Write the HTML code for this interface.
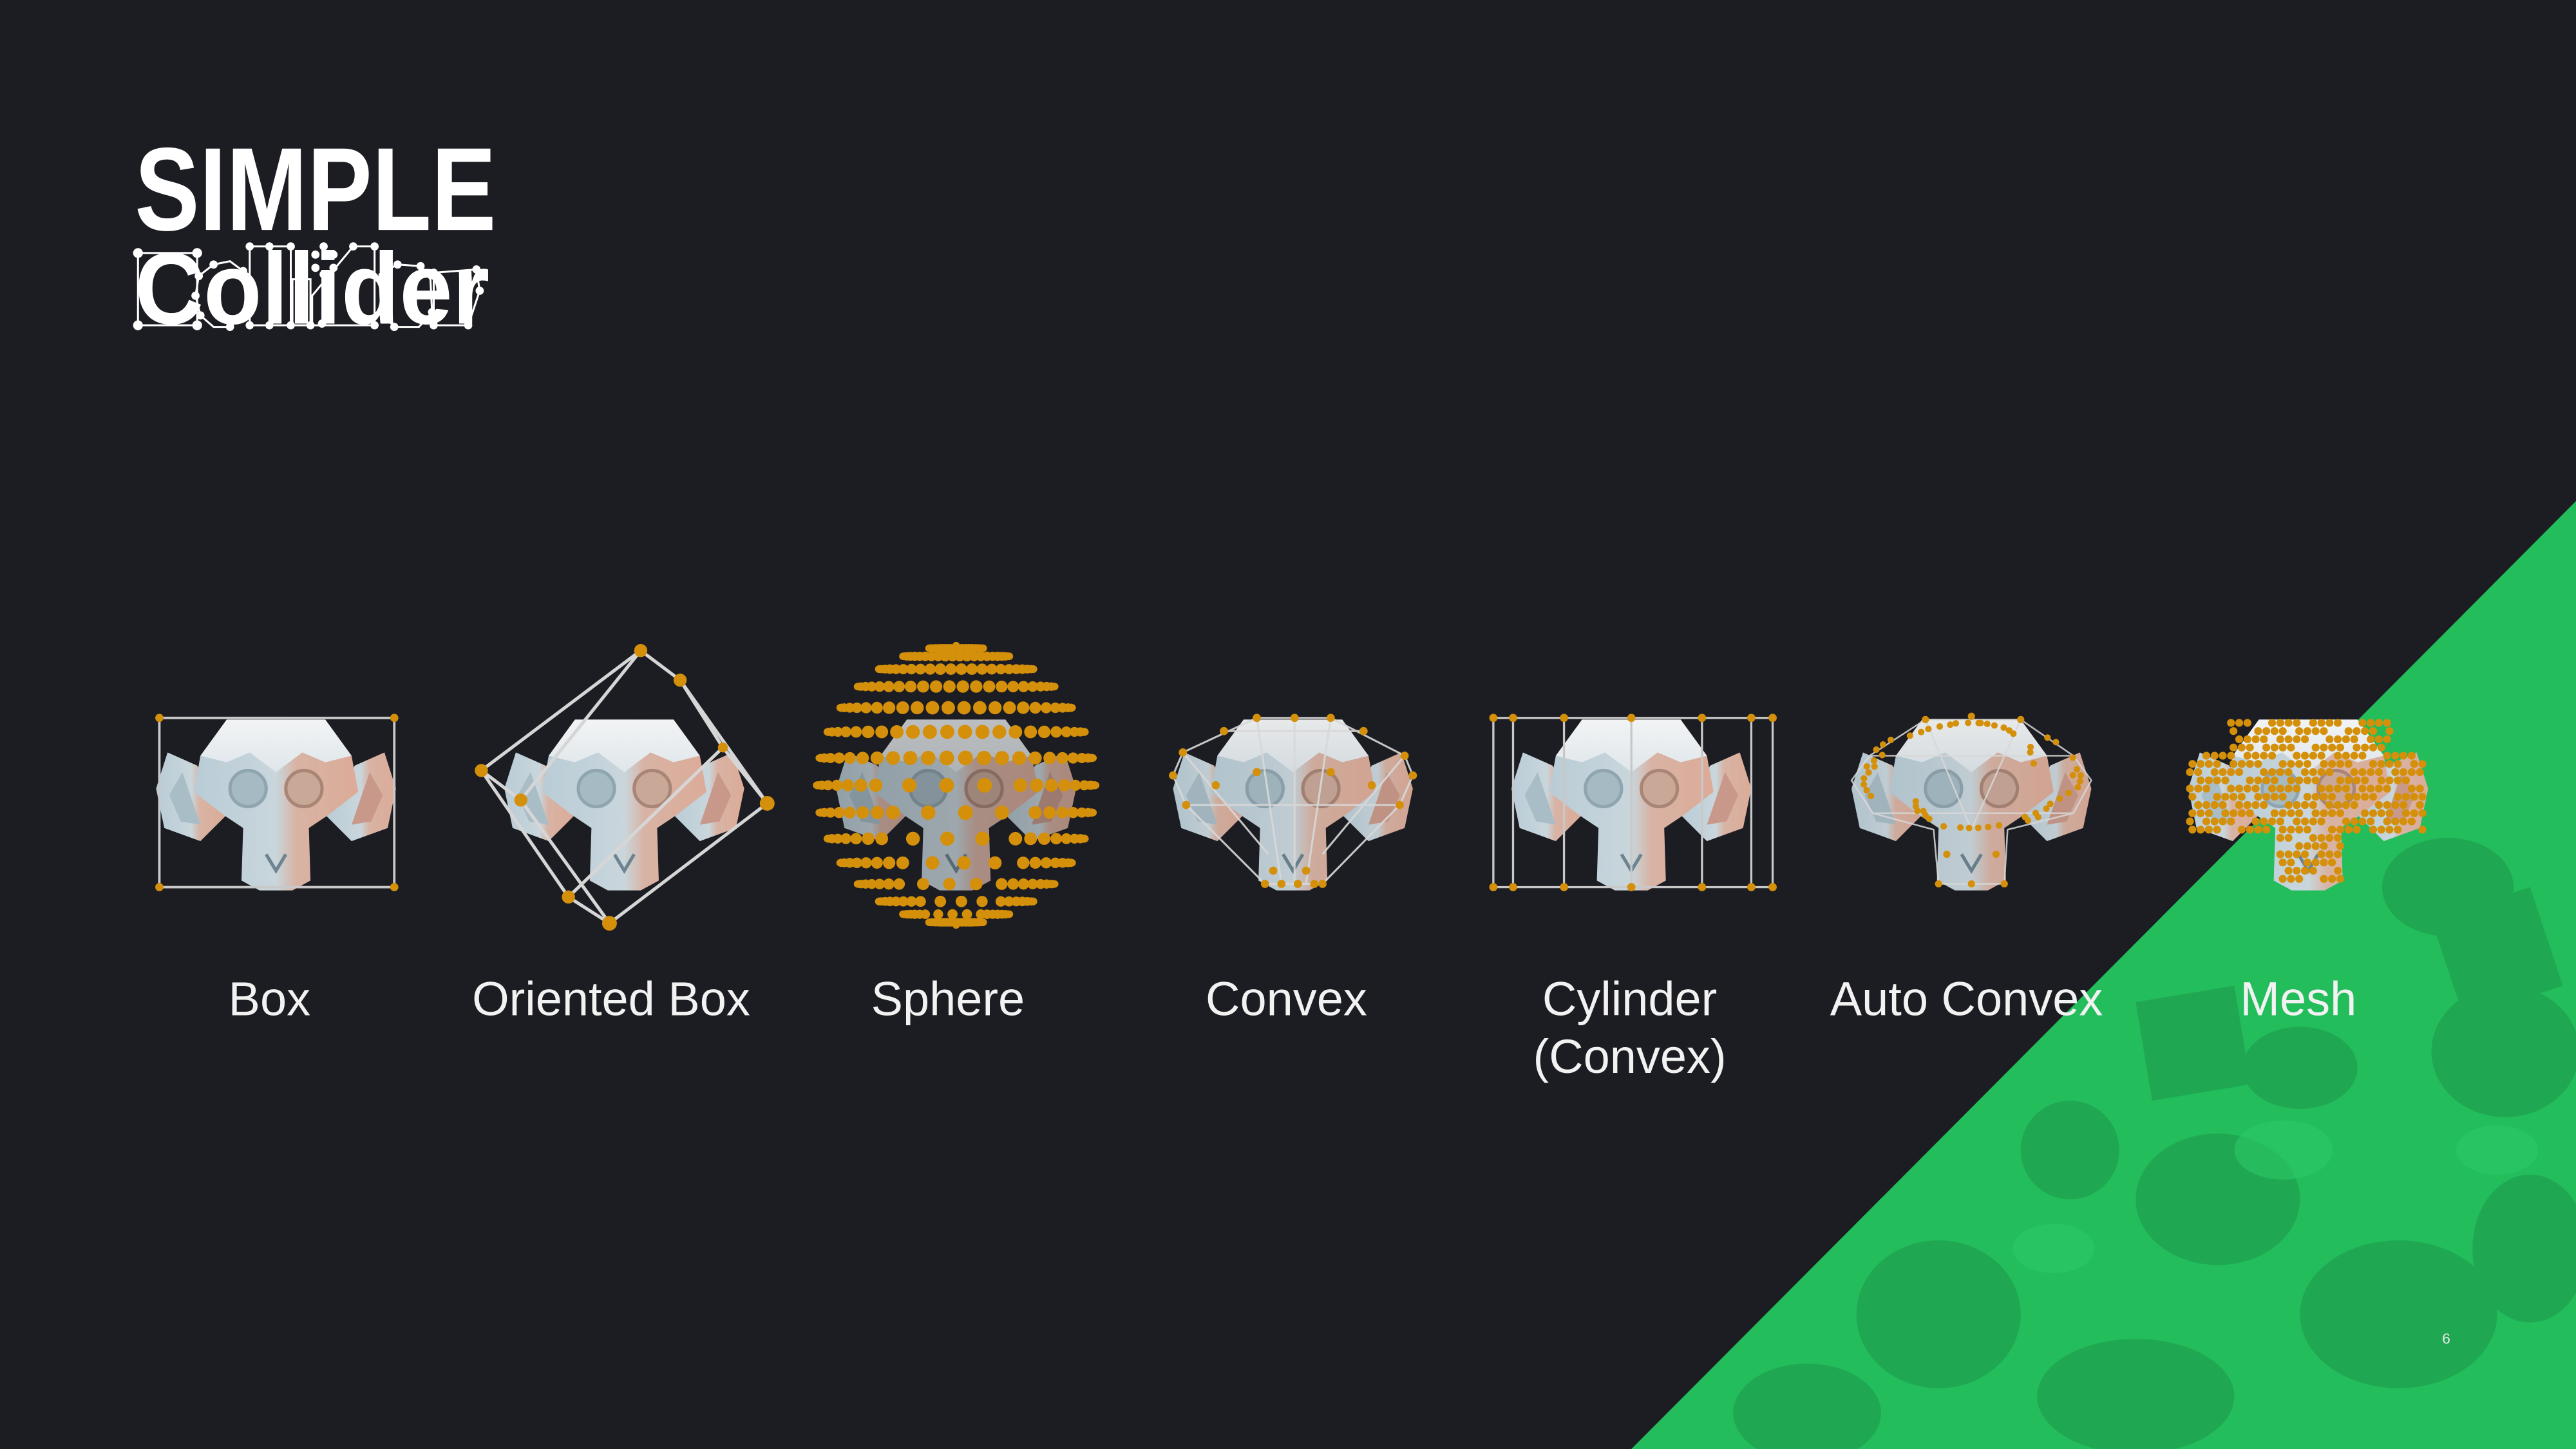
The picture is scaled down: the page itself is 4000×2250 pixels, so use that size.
<!DOCTYPE html>
<html><head><meta charset="utf-8">
<style>
html,body{margin:0;padding:0;background:#1c1d22;}
svg{display:block;}
</style></head>
<body>
<svg id="s" width="4000" height="2250" viewBox="0 0 1568 882" xmlns="http://www.w3.org/2000/svg">
<defs>
<linearGradient id="mk" x1="0" x2="1" y1="0" y2="0">
<stop offset="0" stop-color="#b9ccd6"/><stop offset="0.5" stop-color="#c9d6dc"/><stop offset="0.62" stop-color="#d8b3a4"/><stop offset="1" stop-color="#dcab98"/>
</linearGradient>
<linearGradient id="top" x1="0" y1="0" x2="0" y2="1"><stop offset="0" stop-color="#f2f4f5"/><stop offset="1" stop-color="#dfe6ea"/></linearGradient>
<g id="monkey">
<path d="M-48,-22 L-66,-30 L-73,-8 L-68,16 L-46,24 L-30,8 Z" fill="url(#mk)"/>
<path d="M48,-22 L66,-30 L73,-8 L68,16 L46,24 L30,8 Z" fill="url(#mk)"/>
<path d="M-57,-18 L-65,-4 L-58,12 L-46,14 Z" fill="#a9bdc7"/>
<path d="M57,-18 L65,-4 L58,12 L46,14 Z" fill="#c8998a"/>
<path d="M-30,-50 L30,-50 L46,-28 L50,-6 L32,8 L20,16 L21,48 L10,54 L-10,54 L-21,48 L-20,16 L-32,8 L-50,-6 L-46,-28 Z" fill="url(#mk)"/>
<path d="M-30,-50 L30,-50 L46,-28 L30,-24 L16,-30 L0,-18 L-16,-30 L-30,-24 L-46,-28 Z" fill="url(#top)"/>
<circle cx="-17" cy="-8" r="11" fill="#a6bac4" stroke="#8fa5b0" stroke-width="2"/>
<circle cx="17" cy="-8" r="11" fill="#c9a898" stroke="#a98576" stroke-width="2"/>
<path d="M-6,32 L0,42 L6,32" fill="none" stroke="#6d8490" stroke-width="2"/>
</g>
</defs>
<rect width="1568" height="882" fill="#1c1d22"/>
<!-- green -->
<polygon points="1568,305 993,882 1568,882" fill="#23bd5b"/>
<g fill="#1fa550" opacity="0.85">
<ellipse cx="1525" cy="640" rx="45" ry="40"/><ellipse cx="1490" cy="540" rx="40" ry="30"/>
<ellipse cx="1260" cy="700" rx="30" ry="30"/><ellipse cx="1350" cy="730" rx="50" ry="40"/>
<ellipse cx="1460" cy="800" rx="60" ry="45"/><ellipse cx="1180" cy="800" rx="50" ry="45"/>
<ellipse cx="1300" cy="850" rx="60" ry="35"/><ellipse cx="1100" cy="860" rx="45" ry="30"/>
<ellipse cx="1540" cy="760" rx="35" ry="45"/><ellipse cx="1400" cy="650" rx="35" ry="25"/>
<polygon points="1300,610 1360,600 1370,660 1310,670"/><polygon points="1480,560 1540,540 1560,600 1500,620"/>
</g>
<g fill="#2bc866" opacity="0.6">
<ellipse cx="1390" cy="700" rx="30" ry="18"/><ellipse cx="1520" cy="700" rx="25" ry="15"/><ellipse cx="1250" cy="760" rx="25" ry="15"/>
</g>
<!-- title -->
<text x="82" y="140" font-family="Liberation Sans, sans-serif" font-weight="bold" font-size="72" fill="#fff" textLength="220" lengthAdjust="spacingAndGlyphs">SIMPLE</text>
<text x="82" y="197" font-family="Liberation Sans, sans-serif" font-weight="bold" font-size="62" fill="#fff" textLength="216" lengthAdjust="spacingAndGlyphs">Collider</text>
<g fill="none" stroke="#fff" stroke-width="1.2">
<rect x="84" y="154" width="36" height="44"/>
<polygon points="121,168 130,161 140,159 148,165 152,178 148,192 140,199 130,199 122,192 119,180"/>
<rect x="152" y="150" width="12" height="48"/><rect x="165" y="150" width="12" height="48"/>
<rect x="178" y="170" width="11" height="28"/>
<polyline points="190,198 190,180 215,150 228,150 228,198 190,198"/>
<polygon points="231,167 242,161 256,162 262,170 263,190 255,199 240,199 232,190"/>
<polyline points="264,166 290,164 292,177 285,198 264,198 264,166"/>
</g>
<g fill="#fff">
<circle cx="84" cy="154" r="3"/><circle cx="120" cy="154" r="3"/><circle cx="84" cy="198" r="3"/><circle cx="120" cy="198" r="3"/>
<circle cx="130" cy="161" r="2.5"/><circle cx="148" cy="165" r="2.5"/><circle cx="152" cy="178" r="2.5"/><circle cx="148" cy="192" r="2.5"/><circle cx="140" cy="199" r="2.5"/><circle cx="121" cy="168" r="2.5"/><circle cx="122" cy="192" r="2.5"/><circle cx="119" cy="180" r="2.5"/>
<circle cx="152" cy="150" r="2.5"/><circle cx="164" cy="150" r="2.5"/><circle cx="177" cy="150" r="2.5"/><circle cx="152" cy="198" r="2.5"/><circle cx="164" cy="198" r="2.5"/><circle cx="177" cy="198" r="2.5"/><circle cx="189" cy="198" r="2.5"/>
<circle cx="197" cy="150" r="2.5"/><circle cx="192" cy="155" r="2.5"/><circle cx="203" cy="155" r="2.5"/><circle cx="192" cy="163" r="2.5"/><circle cx="203" cy="163" r="2.5"/><circle cx="197" cy="167" r="2.5"/>
<circle cx="215" cy="150" r="2.5"/><circle cx="228" cy="150" r="2.5"/><circle cx="228" cy="198" r="2.5"/><circle cx="196" cy="197" r="2.5"/>
<circle cx="242" cy="161" r="2.5"/><circle cx="256" cy="162" r="2.5"/><circle cx="263" cy="190" r="2.5"/><circle cx="240" cy="199" r="2.5"/><circle cx="232" cy="190" r="2.5"/>
<circle cx="264" cy="166" r="2.5"/><circle cx="290" cy="164" r="2.5"/><circle cx="292" cy="177" r="2.5"/><circle cx="285" cy="198" r="2.5"/><circle cx="264" cy="198" r="2.5"/>
</g>
<!-- monkeys -->
<use href="#monkey" x="168" y="488"/>
<use href="#monkey" x="380" y="488"/>
<g id="sph"></g>
<use href="#monkey" x="787" y="488" opacity="0.95"/>
<use href="#monkey" x="993" y="488"/>
<use href="#monkey" x="1200" y="488" opacity="0.95"/>
<use href="#monkey" x="1405" y="488"/>
<!-- box -->
<rect x="97" y="437" width="143" height="103" fill="none" stroke="#c8c8c8" stroke-width="1.5"/>
<g fill="#d4900a"><circle cx="97" cy="437" r="2.5"/><circle cx="240" cy="437" r="2.5"/><circle cx="97" cy="540" r="2.5"/><circle cx="240" cy="540" r="2.5"/></g>
<!-- oriented box -->
<g fill="none" stroke="#d6d6d6" stroke-width="2">
<polygon points="390,396 414,414 467,489 371,562 346,546 293,469"/>
<line x1="390" y1="396" x2="317" y2="487"/><line x1="317" y1="487" x2="371" y2="562"/><line x1="317" y1="487" x2="293" y2="469"/>
<line x1="414" y1="414" x2="440" y2="455"/><line x1="440" y1="455" x2="346" y2="546"/><line x1="440" y1="455" x2="467" y2="489"/>
</g>
<g fill="#d4900a"><circle cx="390" cy="396" r="4"/><circle cx="414" cy="414" r="4"/><circle cx="467" cy="489" r="4.5"/><circle cx="371" cy="562" r="4.5"/><circle cx="346" cy="546" r="4"/><circle cx="293" cy="469" r="4"/><circle cx="317" cy="487" r="4"/><circle cx="440" cy="455" r="3"/></g>
<!-- convex -->
<g fill="none" stroke="#d8d8d8" stroke-width="1.2" opacity="0.9">
<polygon points="765,437 810,437 855,460 860,472 852,490 805,538 770,538 722,490 714,472 720,458"/>
<line x1="765" y1="437" x2="780" y2="538"/><line x1="810" y1="437" x2="795" y2="538"/><line x1="720" y1="458" x2="772" y2="520"/><line x1="855" y1="460" x2="805" y2="520"/><line x1="788" y1="437" x2="788" y2="538"/><line x1="745" y1="445" x2="830" y2="445"/><line x1="722" y1="490" x2="852" y2="490"/>
</g>
<g id="cvx" fill="#d4900a"></g>
<!-- cylinder -->
<g fill="none" stroke="#c8c8c8" stroke-width="1.3">
<rect x="909" y="437" width="170" height="103"/>
<line x1="921" y1="437" x2="921" y2="540"/><line x1="952" y1="437" x2="952" y2="540"/><line x1="993" y1="437" x2="993" y2="540"/><line x1="1036" y1="437" x2="1036" y2="540"/><line x1="1066" y1="437" x2="1066" y2="540"/>
</g>
<g fill="#d4900a">
<circle cx="909" cy="437" r="2.5"/><circle cx="921" cy="437" r="2.5"/><circle cx="952" cy="437" r="2.5"/><circle cx="993" cy="437" r="2.5"/><circle cx="1036" cy="437" r="2.5"/><circle cx="1066" cy="437" r="2.5"/><circle cx="1079" cy="437" r="2.5"/>
<circle cx="909" cy="540" r="2.5"/><circle cx="921" cy="540" r="2.5"/><circle cx="952" cy="540" r="2.5"/><circle cx="993" cy="540" r="2.5"/><circle cx="1036" cy="540" r="2.5"/><circle cx="1066" cy="540" r="2.5"/><circle cx="1079" cy="540" r="2.5"/>
</g>
<!-- auto convex -->
<g fill="none" stroke="#d8d8d8" stroke-width="1" opacity="0.85">
<polygon points="1172,438 1230,438 1262,460 1273,475 1262,495 1222,505 1220,538 1180,538 1177,505 1140,495 1127,475 1138,460"/>
<line x1="1172" y1="438" x2="1200" y2="505"/><line x1="1230" y1="438" x2="1200" y2="505"/><line x1="1138" y1="460" x2="1262" y2="460"/><line x1="1140" y1="495" x2="1262" y2="495"/>
</g>
<g id="acx" fill="#d4900a"></g>
<g id="msh" fill="#d4900a"></g>
<!-- labels -->
<g font-family="Liberation Sans, sans-serif" font-size="29" fill="#f2f2f2" text-anchor="middle">
<text x="164" y="618">Box</text>
<text x="372" y="618">Oriented Box</text>
<text x="577" y="618">Sphere</text>
<text x="783" y="618">Convex</text>
<text x="992" y="618">Cylinder</text>
<text x="992" y="653">(Convex)</text>
<text x="1197" y="618">Auto Convex</text>
<text x="1399" y="618">Mesh</text>
</g>
<text x="1489" y="818" font-family="Liberation Sans, sans-serif" font-size="9" fill="#e8e8e8" text-anchor="middle">6</text>
<script>
(function(){
var NS="http://www.w3.org/2000/svg";
function c(g,x,y,r,f){var e=document.createElementNS(NS,"circle");e.setAttribute("cx",x.toFixed(1));e.setAttribute("cy",y.toFixed(1));e.setAttribute("r",r);if(f)e.setAttribute("fill",f);g.appendChild(e);}
var s=document.getElementById("sph");
var cx=582,cy=478,R=85;
var m=document.createElementNS(NS,"use");m.setAttribute("href","#monkey");m.setAttribute("x",582);m.setAttribute("y",488);m.setAttribute("opacity","0.75");s.appendChild(m);
for(var i=0;i<=16;i++){var lat=-Math.PI/2+Math.PI*i/16;var y=cy+R*Math.sin(lat);var rr=R*Math.cos(lat);
 for(var j=0;j<24;j++){var lon=-Math.PI/2+Math.PI*j/23;var x=cx+rr*Math.sin(lon);var sz=2.2+2.3*Math.cos(lon)*Math.cos(lat);
  if(Math.abs(j-11.5)<4&&i>7&&i<15&&((i+j)%2==0))continue;
  c(s,x,y,sz.toFixed(1),"#d4900a");}}
var cv=document.getElementById("cvx");
[[765,437],[788,437],[810,437],[745,445],[830,445],[720,458],[855,460],[714,472],[860,472],[722,490],[852,490],[740,478],[835,478],[770,538],[780,538],[790,538],[800,538],[775,530],[795,530],[805,538],[765,470],[810,470]].forEach(function(p){c(cv,p[0],p[1],2.5);});
var ac=document.getElementById("acx");
for(var k=0;k<60;k++){var a=k*2.399;var rx=(k%3==0)?70:40+(k*7)%30;var x=1200+Math.cos(a)*rx*0.95;var y=472+Math.sin(a)*32;if(y>500&&Math.abs(x-1200)>22)continue;c(ac,x,y,2);}
[[1180,538],[1200,538],[1220,538],[1185,520],[1215,520],[1172,438],[1230,438],[1200,436]].forEach(function(p){c(ac,p[0],p[1],2.2);});
var ms=document.getElementById("msh");
for(var y=440;y<=540;y+=5){for(var x=1333;x<=1480;x+=5){var dx=x-1405,dy=y-488;var inside=false;
 if(dy<-48)inside=false;
 else if(dy<=18&&Math.abs(dx)<50)inside=true;
 else if(dy>-30&&dy<22&&Math.abs(dx)<73&&Math.abs(dx)>=46)inside=true;
 else if(dy>18&&dy<52&&Math.abs(dx)<22)inside=true;
 if(inside&&((x*7+y*3)%11)<8)c(ms,x+((y/5)%2)*1.5,y,2.4);}}
})();
</script>
</svg>
</body></html>
